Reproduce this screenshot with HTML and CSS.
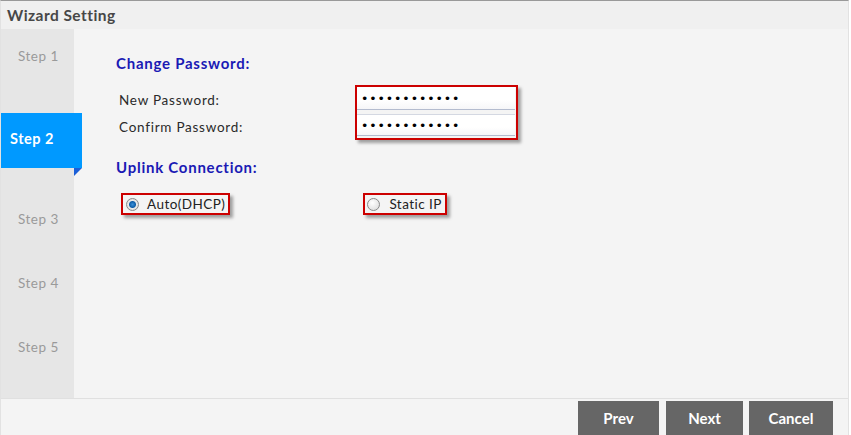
FILE: index.html
```html
<!DOCTYPE html>
<html lang="en">
<head>
    <meta charset="UTF-8">
    <title>Wizard Setting</title>
    <link rel="stylesheet" href="styles.css">
</head>
<body>
    <div class="wizard">
        <div class="wizard-title">Wizard Setting</div>

        <div class="wizard-body">
            <!-- Schritte -->
            <ul class="steps">
                <li class="step step-first">Step 1</li>
                <li class="step step-active">Step 2</li>
                <li class="step step-after">Step 3</li>
                <li class="step">Step 4</li>
                <li class="step">Step 5</li>
            </ul>

            <div class="content">
                <h2 class="section-title">Change Password:</h2>
                <div class="password-form">
                    <div class="labels">
                        <label>New Password:</label>
                        <label>Confirm Password:</label>
                    </div>
                    <div class="mark-box inputs">
                        <input type="password" value="123456789012">
                        <input type="password" value="123456789012">
                    </div>
                </div>

                <h2 class="section-title uplink">Uplink Connection:</h2>
                <div class="radios">
                    <label class="mark-box radio-option radio-auto">
                        <span class="radio checked"></span>Auto(DHCP)
                    </label>
                    <label class="mark-box radio-option radio-static">
                        <span class="radio"></span>Static IP
                    </label>
                </div>
            </div>
        </div>

        <div class="wizard-footer">
            <button class="btn btn-prev">Prev</button>
            <button class="btn btn-next">Next</button>
            <button class="btn btn-cancel">Cancel</button>
        </div>
    </div>
</body>
</html>
```

FILE: styles.css
```css
body {
    margin: 0;
    background: #fff;
    font-family: 'Lato', 'DejaVu Sans', sans-serif;
    color: #333;
    overflow: hidden;
}
.wizard {
    width: 847px;
    height: 434px;
    border-top: 1px solid #999;
    border-left: 1px solid #e2e2e2;
    border-right: 1px solid #e2e2e2;
    background: #f4f4f4;
    display: flex;
    flex-direction: column;
    overflow: hidden;
}
.wizard-title {
    height: 28px;
    line-height: 28px;
    padding-left: 6px;
    background: #f0f0f0;
    color: #474747;
    font-size: 15.5px;
    font-weight: bold;
    letter-spacing: 0.45px;
}
.wizard-body {
    display: flex;
    height: 371px;
}

/* Schritte links */
.steps {
    list-style: none;
    margin: 0;
    padding: 0;
    width: 73px;
    flex: none;
    background: #e6e6e6;
}
.step {
    height: 56px;
    line-height: 54px;
    padding-left: 17px;
    margin-top: 8px;
    color: #9a9a9a;
    font-size: 13.5px;
    letter-spacing: 0.5px;
}
.step-first {
    margin-top: 0;
}
.step-active {
    position: relative;
    height: 55px;
    line-height: 52px;
    margin-top: 28px;
    margin-right: -8px;
    padding-left: 9px;
    background: #0099ff;
    color: #fff;
    font-weight: bold;
    font-size: 14.5px;
}
.step-active::after {
    content: "";
    position: absolute;
    right: 0;
    bottom: -8px;
    border-top: 8px solid #1b5fd8;
    border-right: 8px solid transparent;
}
.step-after {
    margin-top: 24px;
}

/* Inhalt */
.content {
    flex: 1;
    padding: 24px 0 0 42px;
}
.section-title {
    margin: 0;
    height: 20px;
    line-height: 20px;
    color: #1a1ab4;
    font-size: 15px;
    font-weight: bold;
    letter-spacing: 0.75px;
}
.password-form {
    display: flex;
    margin-top: 12px;
}
.labels {
    width: 236px;
    padding: 2px 0 0 3px;
    display: flex;
    flex-direction: column;
}
.labels label {
    height: 27px;
    line-height: 27px;
    font-size: 13.5px;
    color: #2a2a2a;
    letter-spacing: 0.75px;
}
.mark-box {
    border: 2px solid #cc0000;
    box-shadow: 3px 3px 3px rgba(0, 0, 0, 0.35);
}
.inputs {
    width: 158px;
    height: 51px;
    padding: 0 1px 0 0;
    display: flex;
    flex-direction: column;
    gap: 4px;
}
.inputs input {
    width: 100%;
    height: 23px;
    box-sizing: border-box;
    margin: 0;
    padding: 0 0 0 4px;
    border: none;
    border-bottom: 1px solid #b4bccf;
    background: linear-gradient(to bottom, #ffffff 60%, #f6f6f8);
    font-size: 12.5px;
    letter-spacing: 0.9px;
    color: #000;
    font-family: 'DejaVu Sans', sans-serif;
}
.inputs input + input {
    height: 22px;
    border-top: 1px solid #d4d8e2;
}
.uplink {
    margin-top: 16px;
}
.radios {
    display: flex;
    margin-top: 16px;
    padding-left: 5px;
}
.radio-option {
    display: flex;
    align-items: center;
    height: 18px;
    padding: 0 1px 0 3px;
    font-size: 13.5px;
    color: #222;
    letter-spacing: 0.45px;
    white-space: nowrap;
}
.radio-auto {
    padding-right: 3px;
}
.radio-static {
    margin-left: 133px;
    padding-left: 2px;
    padding-right: 3px;
}
.radio {
    width: 11px;
    height: 11px;
    flex: none;
    margin-right: 9px;
    border: 1px solid #8a8a8a;
    border-radius: 50%;
    background: radial-gradient(circle at 40% 35%, #ffffff, #d8d8d8);
    box-sizing: content-box;
}
.radio.checked {
    background: radial-gradient(circle, #3a8fd8 0, #0e5ea8 3px, #eaeaea 4px, #d0d0d0 100%);
}
.radio-auto .radio {
    margin-right: 8px;
}

/* Fusszeile */
.wizard-footer {
    flex: 1;
    border-top: 1px solid #e0e0e0;
    padding: 2px 15px 0 0;
    display: flex;
    justify-content: flex-end;
    gap: 7px;
}
.btn {
    height: 34px;
    border: none;
    background: #666;
    color: #fff;
    font-family: 'Lato', 'DejaVu Sans', sans-serif;
    font-size: 15px;
    font-weight: bold;
    padding: 0;
    cursor: pointer;
}
.btn-prev {
    width: 81px;
}
.btn-next {
    width: 77px;
}
.btn-cancel {
    width: 84px;
    margin-left: -1px;
}
```
